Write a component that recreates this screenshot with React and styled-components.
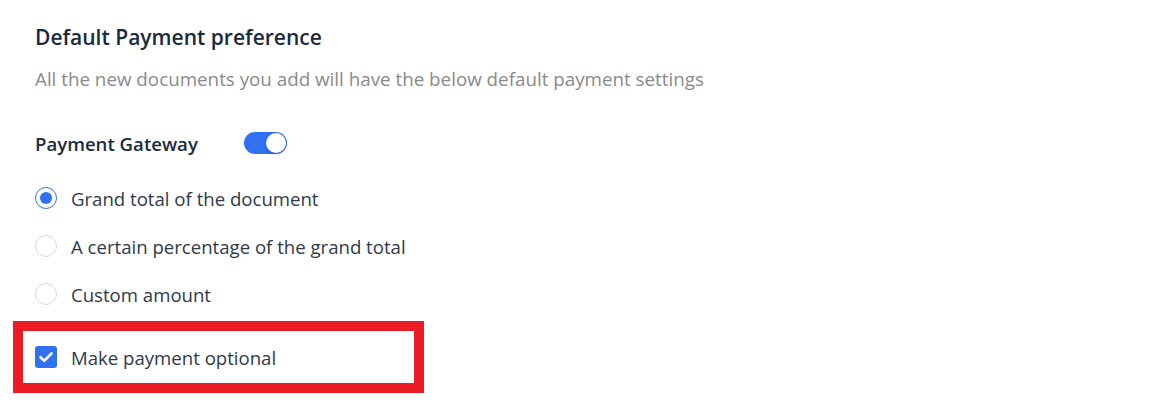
import React, { useState } from 'react';
import styled, { createGlobalStyle } from 'styled-components';

const GlobalStyle = createGlobalStyle`
  body {
    margin: 0;
    background: #ffffff;
    font-family: 'Open Sans', 'Lato', sans-serif;
  }
`;

const Page = styled.div`
  width: 1155px;
  height: 404px;
  padding: 24px 0 0 35px;
  box-sizing: border-box;
`;

const Title = styled.h2`
  margin: 0;
  font-size: 21px;
  font-weight: 600;
  color: #1b2a3d;
  line-height: 26px;
`;

const Subtitle = styled.p`
  margin: 17px 0 0;
  font-size: 18.8px;
  color: #8a8a8a;
  line-height: 24px;
`;

const GatewayRow = styled.div`
  display: flex;
  align-items: center;
  gap: 46px;
  margin-top: 40px;
  height: 24px;
`;

const Label = styled.span`
  font-size: 18.6px;
  font-weight: 600;
  color: #1b2a3d;
`;

const Toggle = styled.button`
  position: relative;
  width: 43px;
  height: 22px;
  border: none;
  border-radius: 11px;
  padding: 0;
  background: ${(p) => (p.$on ? '#3071f2' : '#cfd4dc')};
  cursor: pointer;

  &::after {
    content: '';
    position: absolute;
    top: 1px;
    left: ${(p) => (p.$on ? '22px' : '1px')};
    width: 20px;
    height: 20px;
    border-radius: 50%;
    background: #fff;
    box-shadow: 0 1px 3px rgba(0, 0, 0, 0.25);
  }
`;

const Options = styled.div`
  display: flex;
  flex-direction: column;
  gap: 26px;
  margin-top: 32px;
`;

const OptionRow = styled.label`
  display: flex;
  align-items: center;
  gap: 14px;
  height: 22px;
  font-size: 18.6px;
  color: #2e3a4b;
  cursor: pointer;
`;

const Radio = styled.span`
  width: 22px;
  height: 22px;
  box-sizing: border-box;
  border-radius: 50%;
  border: 1px solid ${(p) => (p.$checked ? '#3071f2' : '#d9d9d9')};
  display: flex;
  align-items: center;
  justify-content: center;
  flex-shrink: 0;

  &::after {
    content: '';
    display: ${(p) => (p.$checked ? 'block' : 'none')};
    width: 12px;
    height: 12px;
    border-radius: 50%;
    background: #3071f2;
  }
`;

const Highlight = styled.div`
  margin: 16px 0 0 -22px;
  width: 411px;
  height: 72px;
  box-sizing: border-box;
  border: 10px solid #ec1c24;
  display: flex;
  align-items: center;
  padding-left: 12px;
`;

const Checkbox = styled.span`
  width: 22px;
  height: 22px;
  border-radius: 3px;
  background: #3071f2;
  display: flex;
  align-items: center;
  justify-content: center;
  flex-shrink: 0;
`;

const options = [
  'Grand total of the document',
  'A certain percentage of the grand total',
  'Custom amount',
];

export default function App() {
  const [gateway, setGateway] = useState(true);
  const [choice, setChoice] = useState(0);

  return (
    <Page>
      <GlobalStyle />
      <Title>Default Payment preference</Title>
      <Subtitle>All the new documents you add will have the below default payment settings</Subtitle>
      <GatewayRow>
        <Label>Payment Gateway</Label>
        <Toggle $on={gateway} onClick={() => setGateway(!gateway)} />
      </GatewayRow>
      <Options>
        {options.map((o, i) => (
          <OptionRow key={o} onClick={() => setChoice(i)}>
            <Radio $checked={choice === i} />
            {o}
          </OptionRow>
        ))}
      </Options>
      <Highlight>
        <OptionRow>
          <Checkbox>
            <svg width="22" height="22" viewBox="0 0 22 22">
              <path d="M5.5 11.2 L9.2 14.8 L16.5 7.5" fill="none" stroke="#fff" strokeWidth="2.6" strokeLinecap="round" strokeLinejoin="round" />
            </svg>
          </Checkbox>
          Make payment optional
        </OptionRow>
      </Highlight>
    </Page>
  );
}
